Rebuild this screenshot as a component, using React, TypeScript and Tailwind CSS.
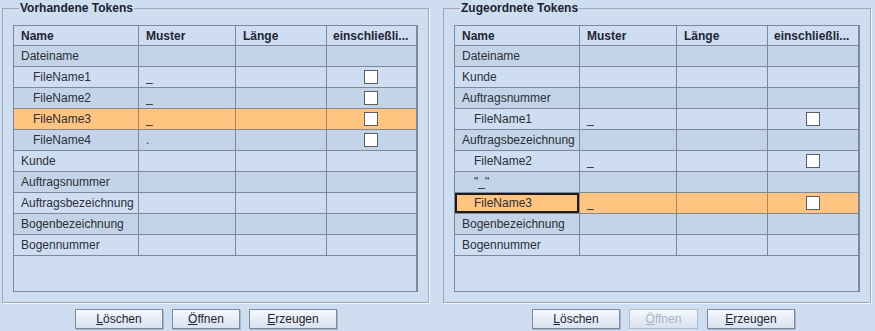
import type { ReactNode } from 'react'

interface TokenRow {
  name: string
  indent?: boolean
  muster?: string
  check?: boolean
  selected?: boolean
  focused?: boolean
}

const leftRows: TokenRow[] = [
  { name: 'Dateiname' },
  { name: 'FileName1', indent: true, muster: '_', check: true },
  { name: 'FileName2', indent: true, muster: '_', check: true },
  { name: 'FileName3', indent: true, muster: '_', check: true, selected: true },
  { name: 'FileName4', indent: true, muster: '.', check: true },
  { name: 'Kunde' },
  { name: 'Auftragsnummer' },
  { name: 'Auftragsbezeichnung' },
  { name: 'Bogenbezeichnung' },
  { name: 'Bogennummer' },
]

const rightRows: TokenRow[] = [
  { name: 'Dateiname' },
  { name: 'Kunde' },
  { name: 'Auftragsnummer' },
  { name: 'FileName1', indent: true, muster: '_', check: true },
  { name: 'Auftragsbezeichnung' },
  { name: 'FileName2', indent: true, muster: '_', check: true },
  { name: '"_"', indent: true },
  { name: 'FileName3', indent: true, muster: '_', check: true, selected: true, focused: true },
  { name: 'Bogenbezeichnung' },
  { name: 'Bogennummer' },
]

const cols = 'grid grid-cols-[125px_97px_91px_1fr]'

const TokenTable = ({ rows }: { rows: TokenRow[] }) => (
  <div className="flex h-[267px] flex-col overflow-hidden border border-r-2 border-[#7e8898] bg-[#cfddf2]">
    {/* header */}
    <div className={`${cols} h-[20px] border-b border-[#7e8898] font-bold text-[#1e2633]`}>
      <div className="flex items-center border-r border-[#7e8898] pl-[7px]">Name</div>
      <div className="flex items-center border-r border-[#7e8898] pl-[7px]">Muster</div>
      <div className="flex items-center border-r border-[#7e8898] pl-[7px]">Länge</div>
      <div className="flex items-center pl-[6px]">einschließli...</div>
    </div>

    {rows.map((row, index) => {
      const bg = row.selected ? 'bg-[#ffc47f]' : index % 2 === 0 ? 'bg-[#c3d3e8]' : 'bg-[#cfddf2]'
      const line = row.selected ? 'border-[#a9855a]' : 'border-[#7e8898]'
      return (
        <div
          key={`${row.name}-${index.toString()}`}
          className={`${cols} h-[21px] border-b border-[#7e8898] text-[#2b2f36] ${bg}`}
        >
          <div
            className={`flex items-center border-r ${line} ${row.indent ? 'pl-[19px]' : 'pl-[7px]'} ${
              row.focused ? 'shadow-[inset_0_0_0_2px_#1c1c1c]' : ''
            }`}
          >
            {row.name}
          </div>
          <div className={`flex items-center border-r ${line} pl-[7px]`}>{row.muster ?? ''}</div>
          <div className={`border-r ${line}`} />
          <div className="flex items-center justify-center pr-[1px]">
            {row.check && <span className="h-[14px] w-[14px] border border-[#5a5f66] bg-white" />}
          </div>
        </div>
      )
    })}
  </div>
)

const Panel = ({ title, rows, className }: { title: string; rows: TokenRow[]; className: string }) => (
  <fieldset
    className={`border border-[#9ea8b6] px-[10px] pt-[10px] pb-[10px] shadow-[1px_1px_0_#f3f6fb] ${className}`}
  >
    <legend className="ml-[6px] px-[1px] text-[12px] leading-[14px] font-bold text-[#1b2230]">{title}</legend>
    <TokenTable rows={rows} />
  </fieldset>
)

const Button = ({
  children,
  width,
  disabled,
}: {
  children: ReactNode
  width: string
  disabled?: boolean
}) => (
  <button
    disabled={disabled}
    className={`h-[20px] ${width} border bg-linear-to-b from-[#f5f8fd] to-[#d8e2f0] text-[12px] leading-none shadow-[1px_1px_0_#a9b4c4] ${
      disabled ? 'border-[#b1bccb] text-[#a8b5c7] shadow-none' : 'border-[#7f8a9c] text-[#1f242c]'
    }`}
  >
    {children}
  </button>
)

const App = () => (
  <div className="flex h-[331px] w-[875px] overflow-hidden bg-[#cfddf1] font-['Liberation_Sans',Arial,sans-serif] text-[12px]">
    <div className="flex w-[429px] flex-col pl-[2px] pt-[1px]">
      <Panel title="Vorhandene Tokens" rows={leftRows} className="w-[427px]" />
      <div className="mt-[6px] flex gap-[9px] pl-[73px]">
        <Button width="w-[88px]">
          <span className="underline">L</span>öschen
        </Button>
        <Button width="w-[68px]">
          <span className="underline">Ö</span>ffnen
        </Button>
        <Button width="w-[88px]">
          <span className="underline">E</span>rzeugen
        </Button>
      </div>
    </div>

    <div className="ml-[14px] flex w-[428px] flex-col pt-[1px]">
      <Panel title="Zugeordnete Tokens" rows={rightRows} className="w-[428px]" />
      <div className="mt-[6px] flex gap-[9px] pl-[89px]">
        <Button width="w-[88px]">
          <span className="underline">L</span>öschen
        </Button>
        <Button width="w-[69px]" disabled>
          <span className="underline">Ö</span>ffnen
        </Button>
        <Button width="w-[88px]">
          <span className="underline">E</span>rzeugen
        </Button>
      </div>
    </div>
  </div>
)

export default App
